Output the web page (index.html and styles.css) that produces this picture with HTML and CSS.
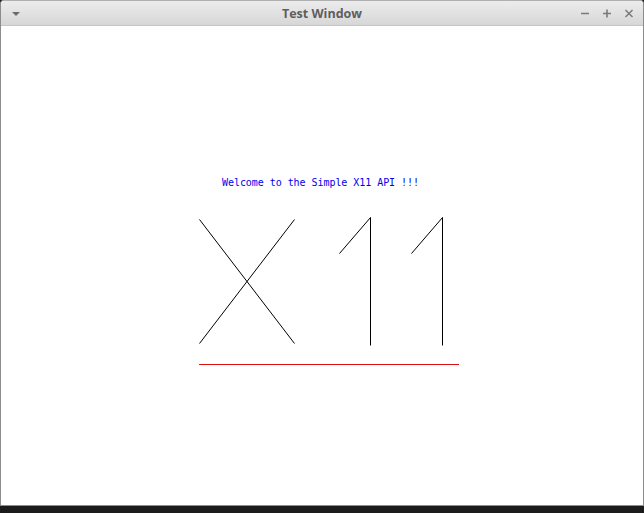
FILE: index.html
```html
<!DOCTYPE html>
<html>
<head>
<meta charset="utf-8">
<link rel="stylesheet" href="styles.css">
</head>
<body>
<div class="window">
  <div class="titlebar">
    <svg class="menu-arrow" width="10" height="6" viewBox="0 0 10 6"><path d="M1 1 L9 1 L5 5 Z" fill="#6b6b6b"/></svg>
    <div class="title">Test Window</div>
    <div class="controls">
      <svg width="12" height="12" viewBox="0 0 12 12"><path d="M2 6.5 H10" stroke="#7a7a7a" stroke-width="1.6"/></svg>
      <svg width="12" height="12" viewBox="0 0 12 12"><path d="M2 6.5 H10 M6 2.5 V10.5" stroke="#7a7a7a" stroke-width="1.6"/></svg>
      <svg width="12" height="12" viewBox="0 0 12 12"><path d="M2.5 3 L9.5 10 M9.5 3 L2.5 10" stroke="#7a7a7a" stroke-width="1.5"/></svg>
    </div>
  </div>
  <svg class="client" width="642" height="479" viewBox="1 26 642 479">
    <text class="welcome" x="222" y="185.5" textLength="197">Welcome to the Simple X11 API !!!</text>
    <g class="strokes">
      <line x1="199.5" y1="219.5" x2="294.5" y2="343.5"/>
      <line x1="294.5" y1="219.5" x2="199.5" y2="343.5"/>
      <line x1="339.5" y1="253.5" x2="370.5" y2="217.5"/>
      <line x1="370.5" y1="217.5" x2="370.5" y2="345.5"/>
      <line x1="411.5" y1="253.5" x2="442.5" y2="217.5"/>
      <line x1="442.5" y1="217.5" x2="442.5" y2="345.5"/>
    </g>
    <rect class="underline" x="199" y="364" width="260" height="1"/>
  </svg>
</div>
</body>
</html>
```

FILE: styles.css
```css
html, body {
  margin: 0;
  padding: 0;
}
body {
  background: #1b1b1b;
  width: 644px;
  height: 513px;
  overflow: hidden;
}
.window {
  width: 642px;
  border: 1px solid #8c8c8c;
  border-top-color: #b0b0b0;
  border-radius: 4px 4px 0 0;
  background: #ffffff;
  overflow: hidden;
}
.titlebar {
  height: 24px;
  display: flex;
  align-items: center;
  justify-content: space-between;
  padding: 0 8px 0 10px;
  background: linear-gradient(#ececec, #d7d7d7);
  border-bottom: 1px solid #c4c4c4;
  position: relative;
}
.menu-arrow {
  margin-top: 1px;
}
.title {
  position: absolute;
  left: 0;
  right: 0;
  top: 0;
  line-height: 26px;
  text-align: center;
  font-family: "Open Sans", "Noto Sans", sans-serif;
  font-weight: 700;
  font-size: 12.5px;
  color: #5e5e5e;
  pointer-events: none;
}
.controls {
  display: flex;
  gap: 10px;
  align-items: center;
}
.client {
  display: block;
  background: #ffffff;
}
.welcome {
  font-family: "DejaVu Sans Mono", "Liberation Mono", monospace;
  font-size: 10px;
  fill: #0000ee;
}
.strokes line {
  stroke: #000000;
  stroke-width: 1;
  fill: none;
}
.underline {
  fill: #e01010;
}
```
